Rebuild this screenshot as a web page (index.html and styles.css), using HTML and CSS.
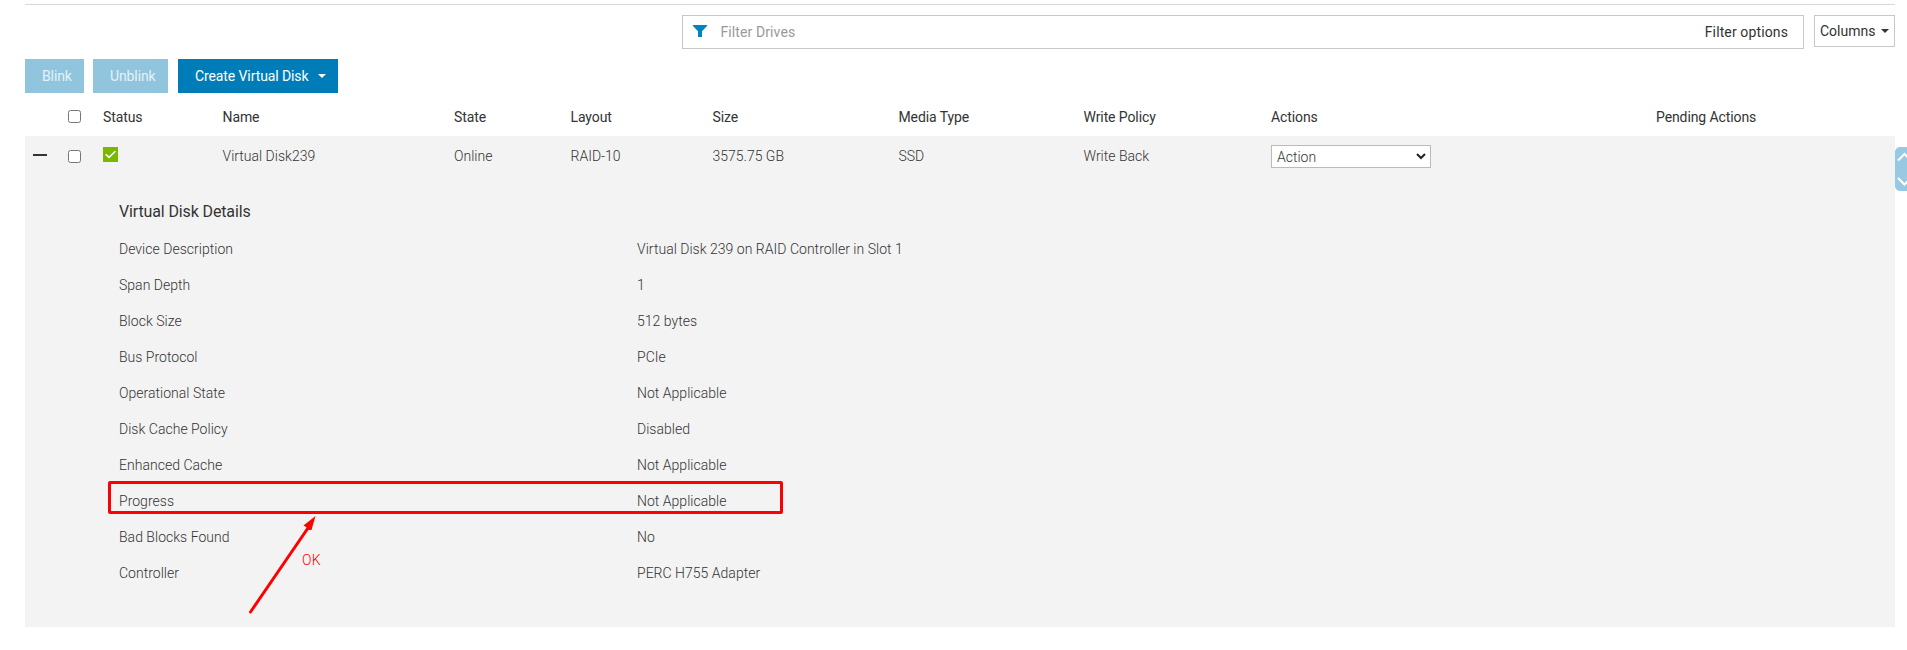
FILE: index.html
```html
<!DOCTYPE html>
<html lang="en">
<head>
<meta charset="utf-8">
<title>Virtual Disks</title>
<link rel="stylesheet" href="styles.css">
</head>
<body>
<main class="page">
  <div class="filter-bar">
    <div class="filter-box">
      <svg class="funnel" width="14" height="12" viewBox="0 0 14 12"><path d="M0 0H14V1L9 6.2V12H5V6.2L0 1Z" fill="#0085c3"/></svg>
      <span class="placeholder">Filter Drives</span>
      <span class="options">Filter options</span>
    </div>
    <div class="columns-btn">Columns<i class="caret"></i></div>
  </div>
  <div class="toolbar">
    <button class="btn off blink">Blink</button>
    <button class="btn off unblink">Unblink</button>
    <button class="btn create">Create Virtual Disk<i class="caret"></i></button>
  </div>
  <div class="row head">
    <span></span><span class="check"></span><span>Status</span><span>Name</span><span>State</span><span>Layout</span><span>Size</span><span>Media Type</span><span>Write Policy</span><span>Actions</span><span>Pending Actions</span>
  </div>
  <section class="disk">
    <div class="row">
      <span class="minus"></span><span class="check"></span>
      <svg class="status" width="15" height="15" viewBox="0 0 15 15"><path d="M0 0H15V15H0Z" fill="#7ab800"/><path d="M2.7 7.2L6 10.4L12.4 4.3" fill="none" stroke="#fff" stroke-width="1.5"/></svg>
      <span>Virtual Disk239</span><span>Online</span><span>RAID-10</span><span>3575.75 GB</span><span>SSD</span><span>Write Back</span>
      <div class="select">Action<svg width="10" height="7" viewBox="0 0 10 7"><path d="M1 1L5 5L9 1" fill="none" stroke="#222" stroke-width="2"/></svg></div>
      <span></span>
    </div>
    <div class="details">
      <h2>Virtual Disk Details</h2>
      <dl>
        <dt>Device Description</dt><dd>Virtual Disk 239 on RAID Controller in Slot 1</dd>
        <dt>Span Depth</dt><dd>1</dd>
        <dt>Block Size</dt><dd>512 bytes</dd>
        <dt>Bus Protocol</dt><dd>PCIe</dd>
        <dt>Operational State</dt><dd>Not Applicable</dd>
        <dt>Disk Cache Policy</dt><dd>Disabled</dd>
        <dt>Enhanced Cache</dt><dd>Not Applicable</dd>
        <dt>Progress</dt><dd>Not Applicable</dd>
        <dt>Bad Blocks Found</dt><dd>No</dd>
        <dt>Controller</dt><dd>PERC H755 Adapter</dd>
      </dl>
    </div>
  </section>
</main>
<div class="highlight"></div>
<svg class="arrow" width="70" height="100" viewBox="0 0 70 100"><path d="M1.5 96L59 12" stroke="#f00" stroke-width="3" stroke-linecap="round"/><path d="M66.5 0L54.5 9.5L57 11L60 14L62.5 14Z" fill="#f00"/></svg>
<span class="note">OK</span>
<div class="side-tab"><svg width="12" height="44" viewBox="0 0 12 44"><path d="M3 13.5L9.5 7L16 13.5M3 31L9.5 37.5L16 31" fill="none" stroke="#fff" stroke-width="2"/></svg></div>
</body>
</html>
```
FILE: styles.css
```css
* { box-sizing: border-box; }
body {
  margin: 0;
  height: 650px;
  position: relative;
  overflow: hidden;
  background: #fff;
  color: #333;
  font: 300 14px/20px Roboto, sans-serif;
}
.page { margin: 4px 12px 0 25px; border-top: 1px solid #d8d8d8; }
.filter-bar { display: flex; justify-content: flex-end; align-items: flex-start; gap: 10px; padding-top: 10px; font-weight: 400; }
.filter-box { width: 1122px; height: 34px; border: 1px solid #c8c8c8; display: flex; align-items: center; padding: 0 15px 0 10px; }
.funnel { margin-top: -2px; }
.placeholder { margin-left: 13.5px; color: #999; flex: 1; letter-spacing: 0.1px; }
.options { letter-spacing: 0.12px; }
.columns-btn { width: 81px; height: 32px; border: 1px solid #c8c8c8; display: flex; align-items: center; padding-left: 5px; }
.caret { border: 4px solid transparent; border-top-color: currentColor; border-bottom: 0; margin-left: 6px; }
.toolbar { display: flex; margin-top: 10px; }
.btn { height: 34px; border: 0; padding: 0 0 0 17px; color: #fff; background: #007db8; font: 400 14px/20px Roboto, sans-serif; letter-spacing: -0.1px; display: flex; align-items: center; }
.off { background: #90c5dd; color: #e5f2f8; }
.blink { width: 59px; margin-right: 9px; }
.unblink { width: 75px; margin-right: 10px; }
.create { width: 160px; }
.create .caret { margin-left: 10px; }
.row { display: grid; grid-template-columns: 43px 35px 119.5px 231.5px 116.5px 142px 186px 185px 187.5px 385px 1fr; height: 40px; align-items: center; }
.head { height: 43px; font-weight: 400; padding-top: 5px; letter-spacing: -0.1px; }
.check { width: 13px; height: 13px; background: #fff; border: 1px solid #767676; border-radius: 2.5px; }
.head .check { margin-top: -1px; }
.minus { width: 14px; height: 2px; margin: -2px 0 0 8px; background: #333; }
.status { margin-top: -3px; }
.disk { background: #f3f3f3; height: 491px; }
.select { width: 160px; height: 23px; border: 1px solid #bbb; background: #fff; display: flex; align-items: center; justify-content: space-between; padding: 1px 4px 0 5px; }
.details { padding: 26px 0 0 94px; }
h2 { margin: 0; font-weight: 400; font-size: 16px; line-height: 20px; letter-spacing: -0.13px; }
dl { margin: 9px 0 0; display: grid; grid-template-columns: 518px 1fr; grid-auto-rows: 36px; align-items: center; letter-spacing: 0.02px; }
dd { margin: 0; }
.highlight { position: absolute; left: 108px; top: 481px; width: 675px; height: 33px; border: 3px solid #f00; border-radius: 2px; }
.arrow { position: absolute; left: 249px; top: 516px; }
.note { position: absolute; left: 302px; top: 550px; color: #f00; letter-spacing: 0.3px; }
.side-tab { position: absolute; left: 1895px; top: 147px; width: 12px; height: 44px; background: #97cae2; border-radius: 5px 0 0 5px; }
```
